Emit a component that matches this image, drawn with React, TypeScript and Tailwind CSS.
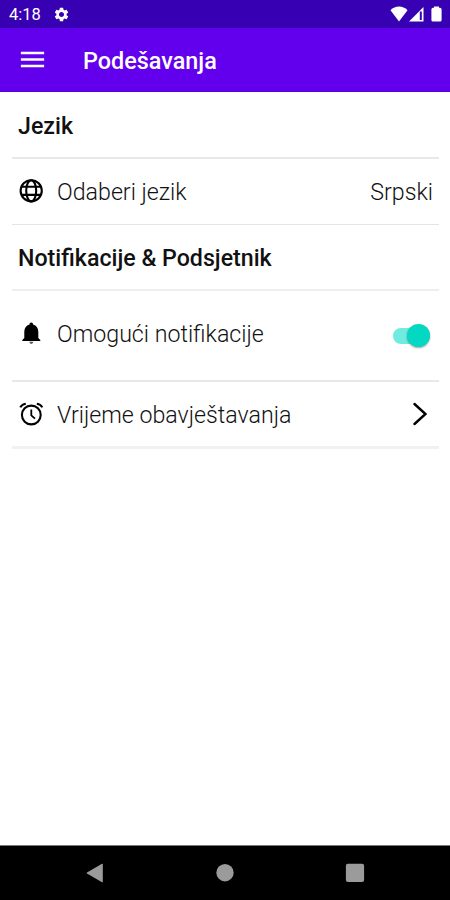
import { useState } from 'react';
import { MdMenu, MdSettings } from 'react-icons/md';

const GlobeIcon = () => (
  <svg className="mb-px mr-3 h-7 w-7 shrink-0 text-black" viewBox="0 0 28 28" fill="none" stroke="currentColor" strokeWidth="2.1">
    <circle cx="14.2" cy="13.8" r="10.6" />
    <ellipse cx="14.2" cy="13.8" rx="5" ry="10.6" />
    <path d="M4.6 9.7h19.2M4.6 17.9h19.2" />
  </svg>
);

const BellIcon = () => (
  <svg className="mb-1 mr-3 h-7 w-7 shrink-0 text-black" viewBox="0 0 28 28" fill="currentColor">
    <path d="M14.3 2.5c1.1 0 1.8.8 1.8 1.9 3.5.9 5.200 3.800 5.200 7.300v6.200l2 2v1.200h-18v-1.200l2-2v-6.200c0-3.500 1.700-6.400 5.200-7.300 0-1.100.7-1.900 1.800-1.900Z" />
    <path d="M12.2 21.8h4.200q-.4 2.100-2.100 2.100t-2.100-2.100Z" opacity=".65" />
  </svg>
);

const AlarmIcon = () => (
  <svg className="mr-3 h-7 w-7 shrink-0 text-black" viewBox="0 0 28 28" fill="none" stroke="currentColor" strokeWidth="2.1">
    <circle cx="14.3" cy="15" r="9.4" />
    <path d="M14.3 9.5v5.800l3.700 3.400" strokeWidth="1.8" />
    <path d="M3.3 7.400Q4.700 4.300 8.800 3.700M25.300 7.400Q23.900 4.300 19.800 3.700" />
  </svg>
);

const StatusBar = () => (
  <div className="flex h-7 items-center justify-between bg-[#3700b3] pl-[9px] pr-2 text-white">
    <div className="flex items-center">
      <span className="w-11 pt-[2px] text-[16.5px] font-normal leading-7">4:18</span>
      <MdSettings className="h-[17px] w-[17px]" />
    </div>
    <svg className="h-4 w-[52px]" viewBox="0 0 52 16" fill="currentColor">
      <path d="M0.5 4.2C5-.6 13-.6 17.5 4.2L9 15.5Z" />
      <path d="M33.5 1v14.5H19Z" />
      <path d="M29.8 5.5h2v8.5h-2z" fill="#3700b3" />
      <path d="M44 .4h5v1.4h1a1.6 1.6 0 0 1 1.6 1.6v10.5a1.6 1.6 0 0 1-1.6 1.6h-7a1.6 1.6 0 0 1-1.6-1.6V3.4A1.6 1.6 0 0 1 43 1.8h1z" />
    </svg>
  </div>
);

const AppBar = () => (
  <header className="flex h-16 items-center border-b border-[#5a00d8] bg-[#6200ee] pl-[17px] text-white">
    <button type="button" aria-label="Menu">
      <MdMenu className="h-[31px] w-[31px]" />
    </button>
    <h1 className="ml-[35px] pt-[3px] text-[23.4px] font-medium leading-7">Podešavanja</h1>
  </header>
);

const NavigationBar = () => (
  <nav className="flex h-[55px] justify-between border-t border-[#777] bg-black pl-[86px] pr-[85px] pt-[17px] text-[#9b9b9b]">
    <svg className="h-5 w-[18px]" viewBox="0 0 18 20" fill="currentColor">
      <path d="M16 .8q.8-.4.8.5v17.4q0 .9-.8.5L1 10.6Q0 10 1 9.4Z" />
    </svg>
    <svg className="ml-px h-5 w-[18px]" viewBox="0 0 18 20" fill="currentColor">
      <circle cx="9" cy="9.7" r="8.7" />
    </svg>
    <svg className="h-5 w-5" viewBox="0 0 20 20" fill="currentColor">
      <rect x=".9" y=".7" width="18.2" height="18.2" rx="2" />
    </svg>
  </nav>
);

const App = () => {
  const [enabled, setEnabled] = useState(true);

  return (
    <div className="flex h-[900px] w-[450px] flex-col bg-white font-['Roboto',sans-serif] text-[#111]">
      <StatusBar />
      <AppBar />
      <main className="flex-1 pl-3 pr-[11px]">
        <h2 className="h-[67px] border-b-2 border-[#e8e8e8] pl-[6px] pt-5 text-[23.2px] font-medium leading-7">
          Jezik
        </h2>
        <div className="flex h-[66px] items-center border-b border-[#e4e4e4] pl-[5px] pr-[6px] text-[23.2px] font-light">
          <GlobeIcon />
          <span className="pt-px">Odaberi jezik</span>
          <span className="ml-auto pt-px">Srpski</span>
        </div>
        <h2 className="h-[66px] border-b-2 border-[#eee] pl-[6px] pt-[19px] text-[23.2px] font-medium leading-7">
          Notifikacije &amp; Podsjetnik
        </h2>
        <div className="flex h-[91px] items-center border-b-2 border-[#e8e8e8] pl-[5px] pr-[9px] text-[23.2px] font-light">
          <BellIcon />
          <span className="pb-[3px]">Omogući notifikacije</span>
          <button
            type="button"
            role="switch"
            aria-checked={enabled}
            aria-label="Omogući notifikacije"
            onClick={() => setEnabled(!enabled)}
            className={`ml-auto flex h-4 w-[37px] items-center rounded-full ${enabled ? 'justify-end bg-[#70ebdf]' : 'justify-start bg-gray-300'}`}
          >
            <span className={`h-[23px] w-[23px] shrink-0 rounded-full shadow-[0_1px_2px_rgba(0,0,0,0.35)] ${enabled ? 'bg-[#03d8c3]' : 'bg-gray-100'}`} />
          </button>
        </div>
        <div className="flex h-[67px] items-center border-b-3 border-[#f1f1f1] pl-[5px] pr-3 text-[23.2px] font-light">
          <AlarmIcon />
          <span className="pt-[2px]">Vrijeme obavještavanja</span>
          <svg className="ml-auto h-6 w-[14px] text-black" viewBox="0 0 14 24" fill="none" stroke="currentColor" strokeWidth="2.4" strokeLinecap="round">
            <path d="m1.5 2 11 10-11 10" />
          </svg>
        </div>
      </main>
      <NavigationBar />
    </div>
  );
};

export default App;
